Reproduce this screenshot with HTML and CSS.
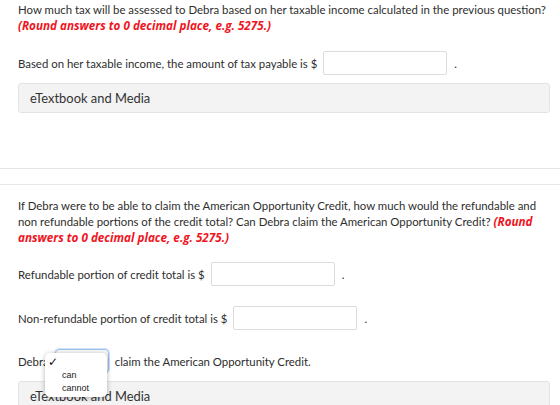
FILE: index.html
```html
<!DOCTYPE html>
<html>
<head>
<meta charset="utf-8">
<link rel="stylesheet" href="styles.css">
</head>
<body>
<div class="section first">
  <p class="q">How much tax will be assessed to Debra based on her taxable income calculated in the previous question? <span class="hint">(Round answers to 0 decimal place, e.g. 5275.)</span></p>
  <div class="row r1">
    <span>Based on her taxable income, the amount of tax payable is $</span>
    <span class="input"></span>
    <span class="dot">.</span>
  </div>
  <div class="ebook">eTextbook and Media</div>
</div>
<div class="sep"></div>
<div class="section second">
  <p class="q">If Debra were to be able to claim the American Opportunity Credit, how much would the refundable and non refundable portions of the credit total? Can Debra claim the American Opportunity Credit? <span class="hint">(Round answers to 0 decimal place, e.g. 5275.)</span></p>
  <div class="row r2">
    <span>Refundable portion of credit total is $</span>
    <span class="input"></span>
    <span class="dot">.</span>
  </div>
  <div class="row r3">
    <span>Non-refundable portion of credit total is $</span>
    <span class="input"></span>
    <span class="dot">.</span>
  </div>
  <div class="row r4">
    <span>Debra</span>
    <span class="select"></span>
    <span>claim the American Opportunity Credit.</span>
    <div class="menu">
      <div class="opt checked"><span class="check">&#10003;</span></div>
      <div class="opt">can</div>
      <div class="opt">cannot</div>
    </div>
  </div>
  <div class="ebook">eTextbook and Media</div>
</div>
</body>
</html>
```
FILE: styles.css
```css
html, body {
  margin: 0;
  padding: 0;
  background: #fff;
  overflow: hidden;
}
body {
  font-family: Lato, "Open Sans", sans-serif;
  font-size: 11.4px;
  color: #2e2e2e;
  width: 560px;
  height: 405px;
}
.section {
  padding: 0 10px 0 18px;
}
.first {
  padding-top: 2px;
}
.q {
  margin: 0;
  line-height: 16px;
}
.hint {
  color: #f0141e;
  font-family: "Open Sans", Lato, sans-serif;
  font-size: 11.7px;
  line-height: 12px;
  font-weight: bold;
  font-style: italic;
}
.row {
  display: flex;
  align-items: center;
  gap: 6px;
  position: relative;
}
.input {
  display: inline-block;
  width: 122px;
  height: 22px;
  border: 1px solid #dcdcdc;
  border-radius: 2px;
  background: #fff;
}
.dot {
  margin-left: 1px;
}
.r1 { margin-top: 17px; }
.ebook {
  margin-top: 8px;
  height: 28px;
  line-height: 28px;
  border: 1px solid #e3e3e3;
  border-radius: 3px;
  background: #f3f3f3;
  padding-left: 11px;
  font-size: 12.9px;
  color: #333;
}
.sep {
  margin-top: 55px;
  height: 15px;
  border-top: 1px solid #e4e4e4;
  border-bottom: 1px solid #e8e8e8;
}
.second .q {
  margin-top: 13px;
}
.r2 { margin-top: 16px; }
.r3 { margin-top: 20px; }
.r4 { margin-top: 19px; }
.select {
  display: inline-block;
  width: 52px;
  height: 22px;
  border: 1px solid #9cc2f0;
  border-radius: 4px;
  background: linear-gradient(#fafafa, #e9e9e9);
  box-shadow: 0 0 0 1px #cfe0f7;
  margin-left: 0;
}
.menu {
  position: absolute;
  left: 27px;
  top: 4px;
  width: 62px;
  padding: 3px 0 3px;
  background: #fff;
  border-radius: 5px;
  box-shadow: 0 1px 5px rgba(0, 0, 0, 0.3);
  font-family: "Liberation Sans", Arial, sans-serif;
  font-size: 9px;
  color: #222;
}
.opt {
  height: 12.5px;
  line-height: 12.5px;
  padding-left: 17px;
}
.opt.checked {
  padding-left: 3px;
  height: 13px;
  line-height: 13px;
}
.check {
  font-family: "DejaVu Sans", sans-serif;
  font-size: 12px;
  line-height: 13px;
  font-weight: bold;
  color: #111;
}
```
